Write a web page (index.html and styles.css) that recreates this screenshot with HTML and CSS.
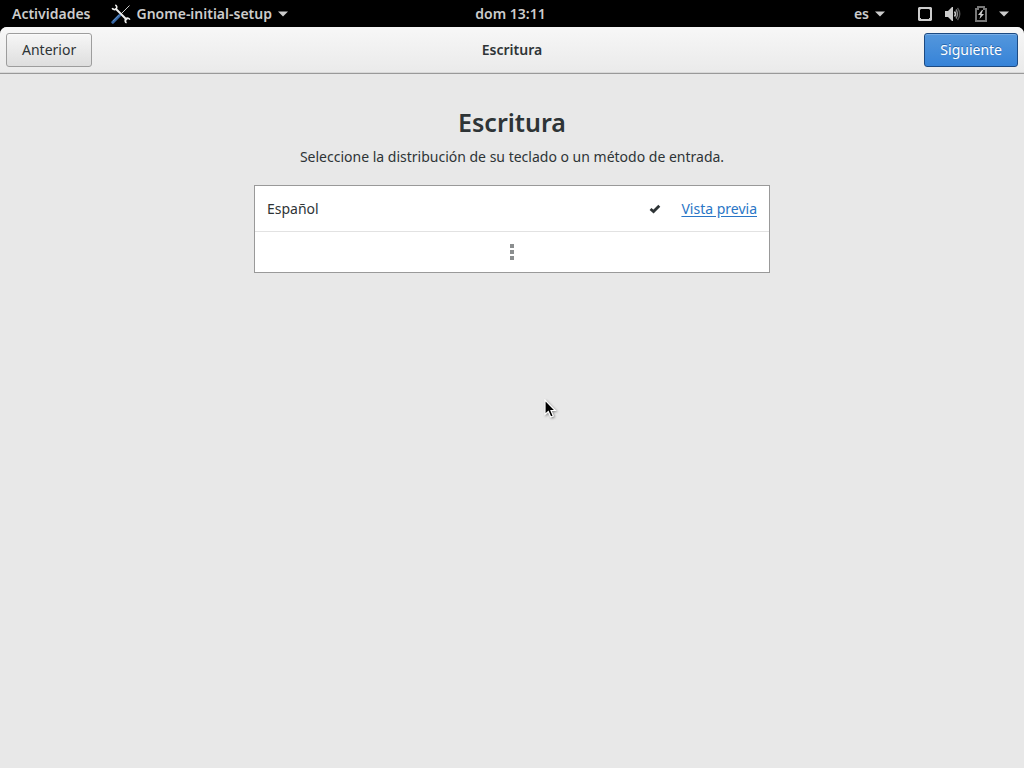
FILE: index.html
```html
<!DOCTYPE html>
<html lang="es">
<head>
<meta charset="utf-8">
<title>Escritura</title>
<link rel="stylesheet" href="styles.css">
</head>
<body>
<nav class="topbar">
  <div class="topbar-start">
    <button class="panel-button" type="button">Actividades</button>
    <button class="panel-button app-menu" type="button">
      <svg class="app-icon" width="20" height="20" viewBox="0 0 20 20" aria-hidden="true">
        <path d="M18.500 1.500 L10 10" stroke="#c8cac8" stroke-width="1" fill="none"/>
        <path d="M1.800 18.200 L8.500 11.500" stroke="#3465a4" stroke-width="3" stroke-linecap="round"/>
        <path d="M2.200 17 L8 11.200" stroke="#729fcf" stroke-width="0.800"/>
        <path d="M4.500 4.500 L16 16" stroke="#eeeeec" stroke-width="2"/>
        <path d="M4.300 1 A2.400 2.400 0 1 1 1.200 4.200 M15.600 18.800 A2.400 2.400 0 1 1 18.800 15.800" stroke="#eeeeec" stroke-width="1.600" fill="none"/>
      </svg>
      <span>Gnome-initial-setup</span>
      <svg width="10" height="6" viewBox="0 0 10 6" aria-hidden="true"><path d="M0 0.500H10L5 5.500Z" fill="currentColor"/></svg>
    </button>
  </div>
  <button class="panel-button" type="button">dom 13:11</button>
  <div class="topbar-end">
    <button class="panel-button language" type="button">
      <span>es</span>
      <svg width="10" height="6" viewBox="0 0 10 6" aria-hidden="true"><path d="M0 0.500H10L5 5.500Z" fill="currentColor"/></svg>
    </button>
    <button class="panel-button status" type="button" aria-label="Menú del sistema">
      <span class="status-icons">
        <svg width="16" height="16" viewBox="0 0 16 16" aria-hidden="true">
          <path fill-rule="evenodd" fill="currentColor" d="M2 1H14L15 2V14L14 15H2L1 14V2ZM4 3L3 4V12H4V13H12V12H13V4L12 3Z"/>
        </svg>
        <svg width="16" height="16" viewBox="0 0 16 16" aria-hidden="true">
          <path fill="currentColor" d="M0 5H3L7 1H8V15H7L3 11H0Z"/>
          <path d="M9.500 5.500Q11.500 8 9.500 10.500" stroke="currentColor" stroke-width="1.500" fill="none"/>
          <path d="M11 3.500Q14 8 11 12.500" stroke="#888" stroke-width="1.400" fill="none"/>
          <path d="M12.500 2Q17 8 12.500 14" stroke="#555" stroke-width="1.400" fill="none"/>
        </svg>
        <svg width="16" height="16" viewBox="0 0 16 16" aria-hidden="true">
          <path fill-rule="evenodd" fill="#777" d="M4 0H12V2H14V16H2V2H4ZM6 2V4H4V14H12V4H10V2Z"/>
          <path d="M9 4L5 9H7.500L6.500 13L11 8H8.500L10 4Z" fill="currentColor"/>
        </svg>
      </span>
      <svg width="10" height="6" viewBox="0 0 10 6" aria-hidden="true"><path d="M0 0.500H10L5 5.500Z" fill="currentColor"/></svg>
    </button>
  </div>
</nav>
<div class="window">
  <header class="headerbar">
    <button class="button" type="button">Anterior</button>
    <span class="title">Escritura</span>
    <button class="button suggested" type="button">Siguiente</button>
  </header>
  <main class="page">
    <h1 class="heading">Escritura</h1>
    <p class="subtitle">Seleccione la distribución de su teclado o un método de entrada.</p>
    <ul class="input-list">
      <li class="input-row">
        <span class="input-name">Español</span>
        <svg width="12" height="10" viewBox="0 0 12 10" role="img" aria-label="Seleccionado"><path d="M1.500 5L4.500 7.500L10.300 1.700" stroke="#2e3436" stroke-width="2.800" fill="none"/></svg>
        <a class="preview" href="#vista-previa">Vista previa</a>
      </li>
      <li>
        <button class="more" type="button" aria-label="Más">
          <svg width="4" height="16" viewBox="0 0 4 16" aria-hidden="true"><path d="M0 0H4V4H0ZM0 6H4V10H0ZM0 12H4V16H0Z" fill="#8b8e8f"/></svg>
        </button>
      </li>
    </ul>
  </main>
</div>
<svg class="pointer" width="14" height="21" viewBox="0 0 14 21" aria-hidden="true">
  <path d="M1 1V15.500L4.300 12.500L6.700 18L9.300 17L7 11.500H11.300Z" fill="#000" stroke="#fff" stroke-width="1.200"/>
</svg>
</body>
</html>
```
FILE: styles.css
```css
* {
  box-sizing: border-box;
}

body {
  margin: 0;
  min-height: 100vh;
  display: flex;
  flex-direction: column;
  background: #000;
  color: #2e3436;
  font: 14px/20px "Noto Sans", "Open Sans", sans-serif;
}

button {
  font: inherit;
  cursor: default;
}

svg {
  flex: none;
}

.topbar {
  display: grid;
  grid-template-columns: 1fr auto 1fr;
  align-items: center;
  height: 27px;
  padding: 0 15px 0 12px;
}

.topbar-start,
.topbar-end {
  display: flex;
  align-items: center;
}

.topbar-start {
  gap: 20px;
}

.topbar-end {
  justify-content: flex-end;
  gap: 32px;
}

.panel-button {
  display: flex;
  align-items: center;
  padding: 0;
  border: 0;
  background: none;
  color: #ccc;
  font-weight: 600;
  white-space: nowrap;
}

.app-menu,
.language {
  gap: 6px;
}

.status {
  gap: 10px;
}

.status-icons {
  display: flex;
  align-items: center;
  gap: 12px;
}

.window {
  flex: 1;
  background: #e8e8e8;
  border-radius: 7px 7px 0 0;
}

.headerbar {
  display: grid;
  grid-template-columns: 1fr auto 1fr;
  align-items: center;
  padding: 6px;
  border-bottom: 1px solid #999;
  border-radius: 7px 7px 0 0;
  background: linear-gradient(#f7f7f7, #eaeaea);
  box-shadow: inset 0 -1px #d8d8d8;
}

.title {
  font-weight: 600;
}

.button {
  justify-self: start;
  height: 34px;
  padding: 0 15px;
  border: 1px solid #9d9d9d;
  border-radius: 3px;
  background: linear-gradient(#f6f6f6, #dedede);
  box-shadow: inset 0 1px #fafafa;
  color: #2e3436;
}

.suggested {
  justify-self: end;
  border-color: #1c4a82;
  background: linear-gradient(#5497dc, #3683d8);
  box-shadow: inset 0 1px #79aee6;
  color: #fff;
  text-shadow: 0 -1px #2768ad;
}

.page {
  display: flex;
  flex-direction: column;
  align-items: center;
  padding: 30px 24px;
}

.heading {
  margin: 0;
  font-size: 25px;
  line-height: 36px;
  font-weight: 600;
}

.subtitle {
  margin: 7px 0 18px;
}

.input-list {
  width: 100%;
  max-width: 516px;
  margin: 0;
  padding: 0;
  border: 1px solid #999;
  background: #fff;
  list-style: none;
}

.input-row {
  display: flex;
  align-items: center;
  padding: 13px 12px 12px;
  border-bottom: 1px solid #e2e2e2;
}

.input-name {
  flex: 1;
}

.preview {
  margin-left: 20px;
  color: #2a76c6;
  text-underline-offset: 2px;
}

.more {
  display: flex;
  justify-content: center;
  align-items: center;
  width: 100%;
  height: 40px;
  padding: 0;
  border: 0;
  background: none;
}

.pointer {
  position: absolute;
  left: 544px;
  top: 399px;
  filter: drop-shadow(1px 1px 1px #0006);
  pointer-events: none;
}
```
